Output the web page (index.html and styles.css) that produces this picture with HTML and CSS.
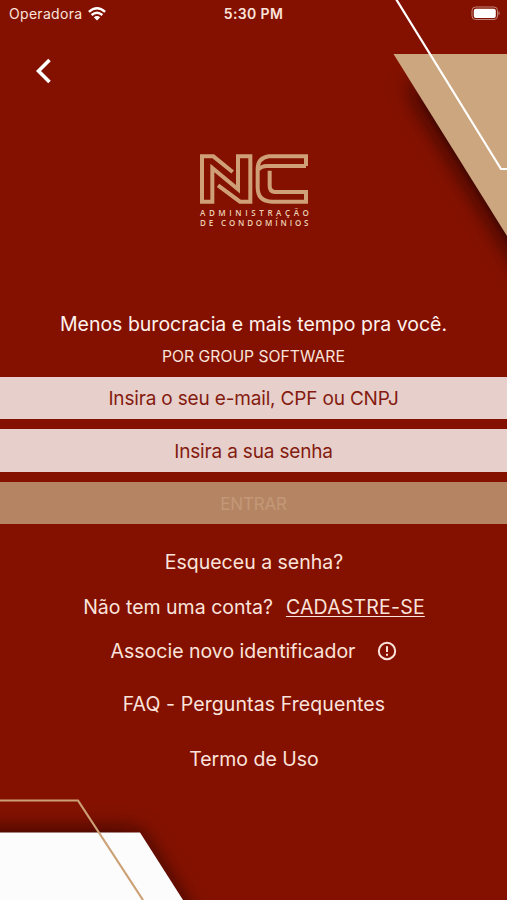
FILE: index.html
```html
<!DOCTYPE html>
<html lang="pt-BR">
<head>
    <meta charset="UTF-8">
    <meta name="viewport" content="width=device-width, initial-scale=1.0">
    <title>NC Administração de Condomínios</title>
    <link rel="stylesheet" href="styles.css">
</head>
<body>
    <!-- background shapes -->
    <svg class="background" viewBox="0 0 507 900" aria-hidden="true">
        <defs>
            <filter id="shadow" filterUnits="userSpaceOnUse" x="-60" y="0" width="640" height="980">
                <feGaussianBlur stdDeviation="12"/>
            </filter>
        </defs>
        <path class="shape-shadow" filter="url(#shadow)" d="M410 84H580V357Z"/>
        <path class="shape-gold" d="M393.500 54H507V236Z"/>
        <path class="line-white" d="M396 -1L501 169H508"/>
        <path class="shape-shadow" filter="url(#shadow)" d="M-50 834H136L206 945H-50Z"/>
        <path class="shape-white" d="M0 832.500H140L183 900H0Z"/>
        <path class="line-gold" d="M-1 800.500H78L143 900"/>
    </svg>

    <div class="screen">
        <div class="status-bar">
            <div class="carrier">
                <span>Operadora</span>
                <svg class="wifi" viewBox="0 0 18 14">
                    <path d="M0.900 4.900Q9 -2.300 17.100 4.900M3.600 8Q9 3.400 14.400 8"/>
                    <path class="wifi-dot" d="M5.800 10.200Q9 7.600 12.200 10.200L9 13.400Z"/>
                </svg>
            </div>
            <div class="clock">5:30 PM</div>
            <svg class="battery" viewBox="0 0 30 15">
                <rect class="battery-case" x="1" y="1" width="25.500" height="12.500" rx="3.500"/>
                <rect class="battery-level" x="2.800" y="2.700" width="22" height="9.200" rx="2"/>
                <path class="battery-tip" d="M27.500 5Q30 7.200 27.500 9.500Z"/>
            </svg>
        </div>

        <button class="back" aria-label="Voltar">
            <svg viewBox="0 0 16 26"><path d="M13.500 2L2.500 13L13.500 24"/></svg>
        </button>

        <div class="logo">
            <svg class="logo-mark" viewBox="0 0 324 150">
                <path d="M98 54L40 7H6V143H37V42L114 106V7H151V143H120L54 94"/>
                <path d="M318 36V7H206Q173 12 173 46V100Q173 143 216 143H318V114H224Q209 112 209 96V50M173 48Q184 36 201 36H318"/>
            </svg>
            <div class="logo-text">ADMINISTRAÇÃO</div>
            <div class="logo-text logo-text-2">DE CONDOMÍNIOS</div>
        </div>

        <h1>Menos burocracia e mais tempo pra você.</h1>
        <div class="by">POR GROUP SOFTWARE</div>

        <form class="login">
            <input class="user" type="text" placeholder="Insira o seu e-mail, CPF ou CNPJ">
            <input class="pass" type="password" placeholder="Insira a sua senha">
            <button class="enter" type="button" disabled>ENTRAR</button>
        </form>

        <div class="links">
            <a class="forgot">Esqueceu a senha?</a>
            <div class="row signup"><span>Não tem uma conta?</span><a class="register">CADASTRE-SE</a></div>
            <div class="row identifier">
                <a>Associe novo identificador</a>
                <svg class="info" viewBox="0 0 20 20">
                    <circle cx="10" cy="10" r="8.200"/>
                    <path d="M10 5.200V11M10 12.800V14.800"/>
                </svg>
            </div>
            <a class="faq">FAQ - Perguntas Frequentes</a>
            <a class="terms">Termo de Uso</a>
        </div>
    </div>
</body>
</html>
```
FILE: styles.css
```css
* {
    box-sizing: border-box;
}
body {
    margin: 0;
    height: 900px;
    overflow: hidden;
    position: relative;
    background-color: #841100;
    color: #fbe3dc;
    font-family: Inter, "Liberation Sans", sans-serif;
    font-size: 19.5px;
}
.background {
    position: absolute;
    top: 0;
    left: 0;
    width: 507px;
    height: 900px;
}
.shape-shadow {
    fill: #180000;
}
.shape-gold {
    fill: #cca67e;
}
.shape-white {
    fill: #fcfcfc;
}
.line-white {
    fill: none;
    stroke: #fff;
    stroke-width: 2.2;
}
.line-gold {
    fill: none;
    stroke: #cca176;
    stroke-width: 2.2;
}
.screen {
    position: relative;
    display: flex;
    flex-direction: column;
}
.status-bar {
    display: grid;
    grid-template-columns: 1fr auto 1fr;
    align-items: center;
    height: 27px;
    padding: 0 6px 0 9px;
    font-size: 14px;
}
.carrier {
    display: flex;
    align-items: center;
    gap: 6px;
    letter-spacing: 0.3px;
}
.wifi {
    width: 18px;
    height: 14px;
    fill: none;
    stroke: #fff;
    stroke-width: 2.3;
}
.wifi-dot {
    fill: #fff;
    stroke: none;
}
.clock {
    font-weight: 600;
    letter-spacing: 0.35px;
    margin-right: 3px;
}
.battery {
    width: 30px;
    height: 15px;
    justify-self: end;
}
.battery-case {
    fill: none;
    stroke: #c1847a;
    stroke-width: 1;
}
.battery-level {
    fill: #fff;
}
.battery-tip {
    fill: #c1847a;
}
.back {
    width: 16px;
    height: 26px;
    margin: 31px 0 0 36px;
    padding: 0;
    border: none;
    background: none;
}
.back svg {
    display: block;
    width: 16px;
    height: 26px;
    fill: none;
    stroke: #fff;
    stroke-width: 3.6;
}
.logo {
    width: 110px;
    margin: 70px 0 0 200px;
    color: #eccfb4;
}
.logo-mark {
    display: block;
    width: 108px;
    height: 50px;
    fill: none;
    stroke: #cfa077;
    stroke-width: 12;
}
.logo-text {
    font-family: "Open Sans", sans-serif;
    font-size: 8px;
    font-weight: 600;
    line-height: 10px;
    margin-top: 4px;
    letter-spacing: 3.6px;
    white-space: nowrap;
}
.logo-text-2 {
    margin-top: 0;
    letter-spacing: 2.85px;
}
h1 {
    margin: 83px 0 0;
    font-size: 19.5px;
    font-weight: 400;
    line-height: 26px;
    text-align: center;
    color: #fff2ee;
}
.by {
    margin-top: 10px;
    font-size: 15.7px;
    line-height: 20px;
    text-align: center;
}
.login {
    display: flex;
    flex-direction: column;
    gap: 10px;
    margin-top: 9.5px;
}
.login input,
.enter {
    display: block;
    width: 100%;
    height: 42.5px;
    padding: 2px 0 0;
    border: none;
    border-radius: 0;
    font-family: inherit;
    font-size: 19px;
    letter-spacing: -0.17px;
    text-align: center;
}
.login input {
    background-color: #e7cfcb;
    color: #841b10;
}
.login input::placeholder {
    color: #841b10;
}
.login .enter {
    background-color: #b58563;
    color: #c39878;
    font-size: 17px;
}
.links {
    display: flex;
    flex-direction: column;
    align-items: center;
    margin-top: 25px;
    padding-left: 1px;
    line-height: 26px;
}
.row {
    display: flex;
    align-items: center;
    margin-top: 18.5px;
}
.register {
    margin-left: 13px;
    letter-spacing: 0.2px;
    text-decoration: underline;
    text-decoration-thickness: 1.3px;
    text-underline-offset: 2px;
}
.info {
    width: 20px;
    height: 20px;
    margin-left: 22px;
    fill: none;
    stroke: #fbe3dc;
    stroke-width: 2;
}
.faq {
    margin-top: 27px;
    letter-spacing: 0.1px;
}
.terms {
    margin-top: 29px;
}
```
